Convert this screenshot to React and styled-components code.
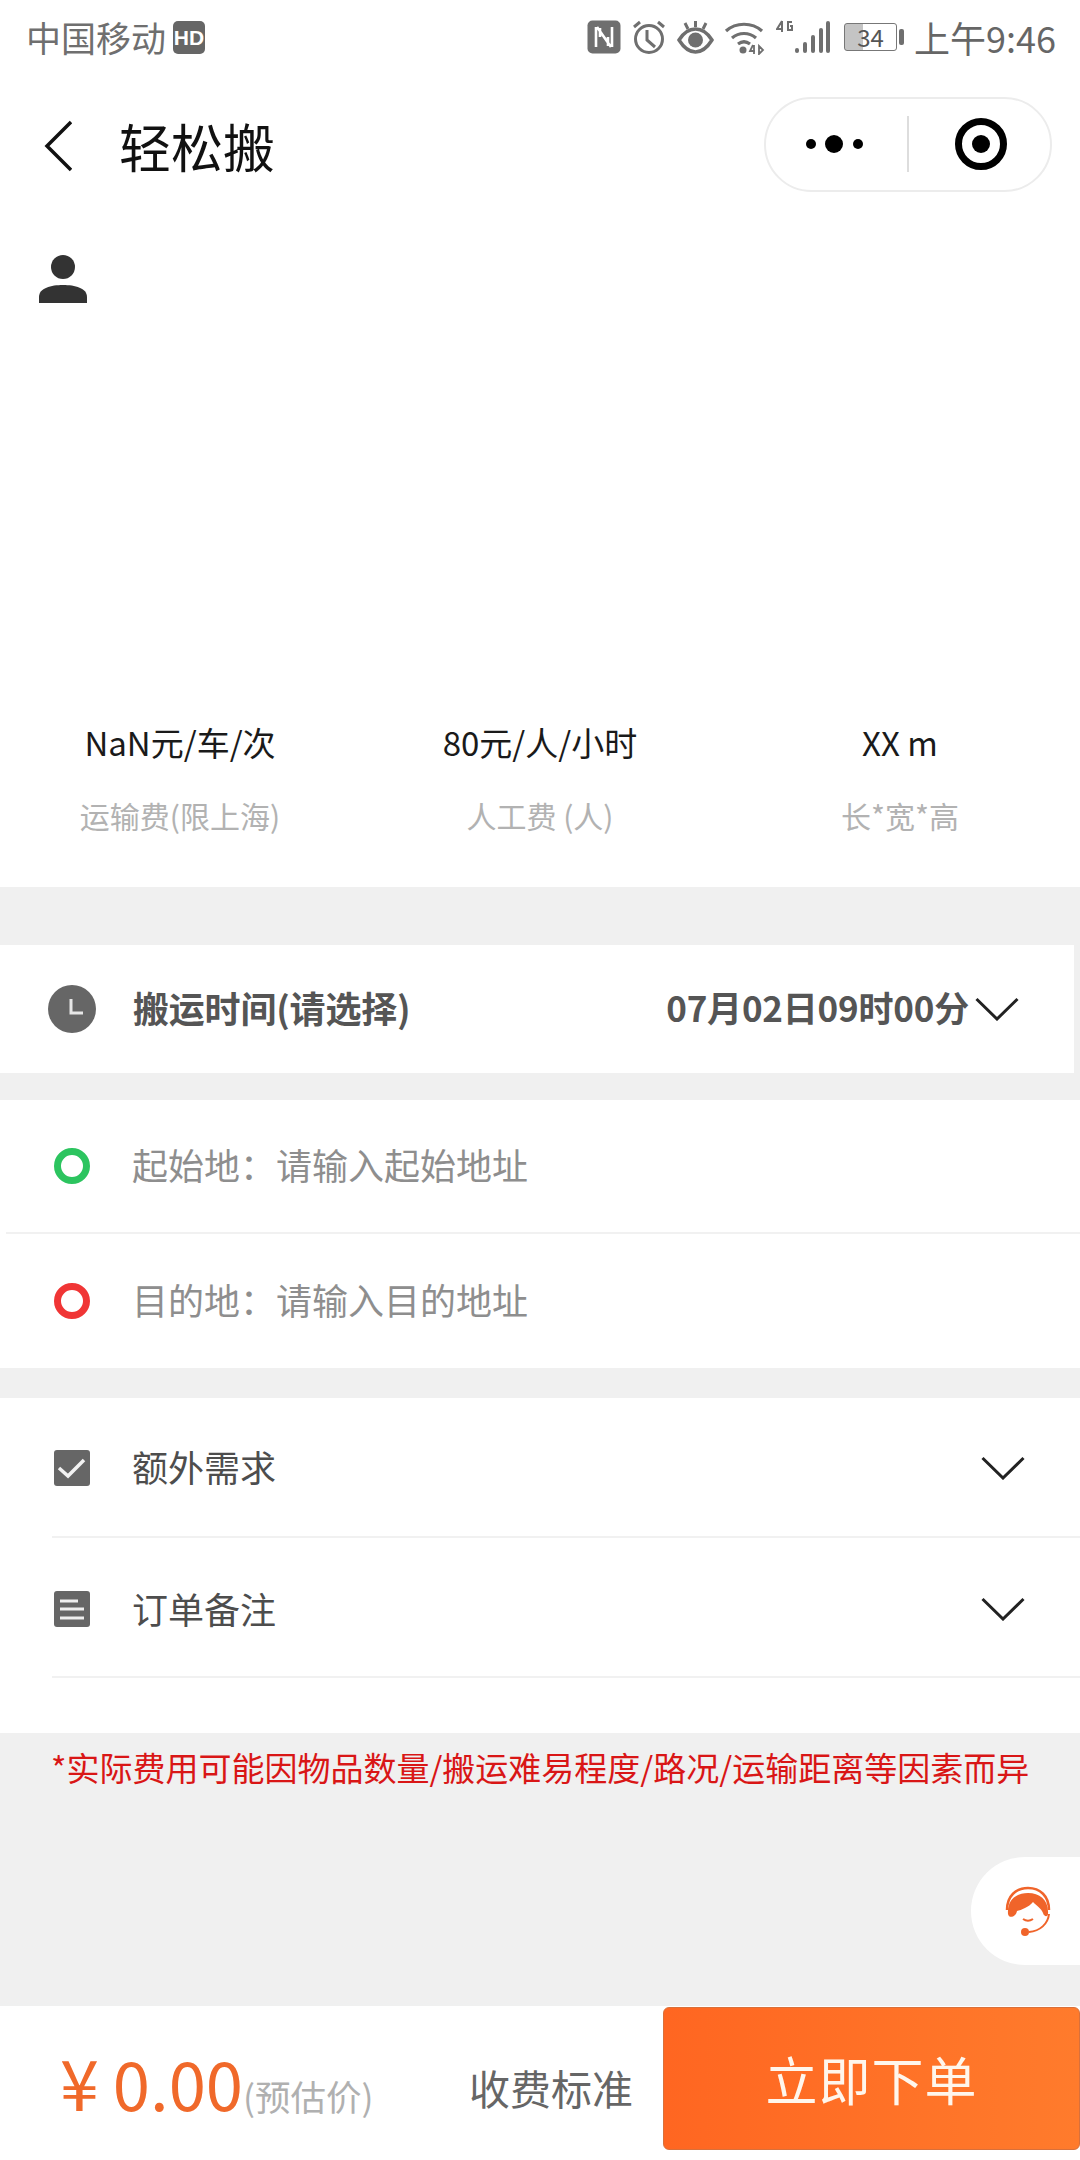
import React from 'react';
import styled, { createGlobalStyle } from 'styled-components';

const Global = createGlobalStyle`
  html, body { margin: 0; padding: 0; background: #f0f0f0; }
  * { box-sizing: border-box; }
  body { font-family: "Noto Sans CJK SC", "Noto Sans", sans-serif; }
`;

const Page = styled.div`
  position: relative;
  width: 1080px;
  height: 2160px;
  display: flex;
  flex-direction: column;
  overflow: hidden;
  background: #f0f0f0;
`;
const TopPanel = styled.section`
  height: 887px;
  background: #fff;
  display: flex;
  flex-direction: column;
`;
const StatusBar = styled.div`
  height: 74px;
  display: flex;
  align-items: center;
  padding: 0 24px 0 26px;
  color: #6f6f6f;
`;
const Carrier = styled.span`
  font-size: 35px;
  line-height: 40px;
  margin-right: 7px;
`;
const StatusIcons = styled.div`
  margin-left: auto;
  display: flex;
  align-items: center;
  gap: 10px;
`;
const Battery = styled.div`
  display: flex;
  align-items: center;
  gap: 2px;
  width: 62px;
`;
const BatteryBody = styled.div`
  width: 53px;
  height: 28px;
  border: 1.5px solid #777;
  border-radius: 3px;
  background: linear-gradient(90deg, #c4c4c4 18px, #fff 18px);
  font-size: 24px;
  line-height: 25px;
  color: #555;
  text-align: center;
`;
const BatteryNub = styled.div`
  width: 5px;
  height: 16px;
  border-radius: 2px;
  background: #6f6f6f;
`;
const Clock = styled.span`
  font-size: 36px;
  line-height: 40px;
  margin-left: -2px;
  color: #666;
`;
const Nav = styled.header`
  height: 144px;
  display: flex;
  align-items: center;
  padding: 0 28px 0 44px;
`;
const Title = styled.h1`
  margin: 0 0 0 47px;
  font-size: 52px;
  font-weight: 400;
  line-height: 60px;
  color: #111;
`;
const Capsule = styled.div`
  margin-left: auto;
  width: 288px;
  height: 95px;
  border: 2px solid #ececec;
  border-radius: 48px;
  display: flex;
  align-items: center;
  margin-bottom: 4px;
`;
const CapsuleHalf = styled.div`
  width: 50%;
  height: 100%;
  display: flex;
  align-items: center;
  justify-content: center;
  padding: ${p => (p.$shift ? '0 4px 0 0' : '0 0 0 3px')};
`;
const CapsuleLine = styled.div`
  width: 2px;
  height: 56px;
  background: #ddd;
  flex: none;
`;
const Profile = styled.div`
  padding: 37px 0 0 39px;
  height: 85px;
`;
const Stats = styled.div`
  margin-top: 414px;
  display: grid;
  grid-template-columns: repeat(3, 360px);
  text-align: center;
`;
const Stat = styled.div`
  display: flex;
  flex-direction: column;
  gap: 26px;
`;
const StatValue = styled.div`
  font-size: 33px;
  line-height: 50px;
  color: #1a1a1a;
`;
const StatLabel = styled.div`
  font-size: 30px;
  line-height: 44px;
  color: #b2b2b2;
`;
const TimeRow = styled.section`
  margin-top: 58px;
  width: 1074px;
  height: 128px;
  background: #fff;
  display: flex;
  align-items: center;
  padding: 0 55px 0 48px;
`;
const Slot = styled.div`
  width: ${p => (p.$narrow ? 36 : 48)}px;
  display: flex;
  justify-content: center;
  flex: none;
  margin-left: ${p => (p.$narrow ? 2 : 0)}px;
  margin-right: ${p => (p.$narrow ? 43 : 37)}px;
`;
const BoldText = styled.span`
  font-size: 36px;
  font-weight: 700;
  line-height: 50px;
  color: #555;
  margin-bottom: 5px;
  letter-spacing: -0.2px;
`;
const DateText = styled(BoldText)`
  margin-left: auto;
  margin-right: 6px;
  font-size: 35px;
`;
const Card = styled.section`
  margin-top: ${p => p.$top}px;
  background: #fff;
  padding-bottom: ${p => p.$bottom || 0}px;
`;
const Row = styled.div`
  height: ${p => p.$h}px;
  margin-left: ${p => p.$inset}px;
  padding: ${p => p.$drop || 0}px 55px 0 ${p => Math.max(0, 48 - p.$inset)}px;
  display: flex;
  align-items: center;
  border-bottom: ${p => (p.$line ? '2px solid #f1f1f1' : 'none')};
`;
const RowLabel = styled.span`
  font-size: 36px;
  line-height: 50px;
  color: #4d4d4d;
  margin: 0 0 3px -1px;
`;
const Placeholder = styled.span`
  font-size: 36px;
  line-height: 50px;
  color: #8e8e8e;
  white-space: nowrap;
  margin: 0 0 4px -1px;
`;
const PushRight = styled.div`
  margin-left: auto;
  display: flex;
`;
const Note = styled.p`
  margin: 11px 0 0;
  padding-left: 51px;
  font-size: 33px;
  line-height: 46px;
  color: #d91616;
  white-space: nowrap;
`;
const Fill = styled.div`
  flex: 1;
`;
const Footer = styled.footer`
  height: 154px;
  background: #fff;
  display: flex;
  align-items: flex-start;
`;
const PriceArea = styled.div`
  width: 469px;
  height: 142px;
  padding: 0 0 0 60px;
  display: flex;
  align-items: baseline;
  line-height: 150px;
  white-space: nowrap;
`;
const Yen = styled.span`
  font-size: 70px;
  color: #f0692a;
  margin-right: 14px;
  line-height: 150px;
`;
const Amount = styled.span`
  font-size: 67px;
  color: #f0692a;
`;
const Estimate = styled.span`
  font-size: 35.500px;
  color: #b0b0b0;
`;
const Fee = styled.span`
  width: 194px;
  height: 142px;
  font-size: 41px;
  line-height: 162px;
  color: #666;
  white-space: nowrap;
`;
const Submit = styled.button`
  width: 417px;
  height: 143px;
  margin-top: 1px;
  border: 1px solid #d9703a;
  border-radius: 6px;
  background: linear-gradient(90deg, #ff6621, #ff7b2c);
  color: #fff6ec;
  font-family: inherit;
  font-size: 52px;
  line-height: 60px;
  padding: 0;
  letter-spacing: 1px;
`;
const ServiceTab = styled.div`
  position: absolute;
  right: 0;
  top: 1857px;
  width: 109px;
  height: 108px;
  border-radius: 54px 0 0 54px;
  background: #fff;
  display: flex;
  align-items: center;
  padding-left: 33px;
`;

const Chevron = () => (
  <svg width="44" height="24" viewBox="0 0 44 24">
    <path d="M1.5 2 L22 22 L42.5 2" fill="none" stroke="#222" strokeWidth="3" />
  </svg>
);

const statusIcons = (
  <StatusIcons>
    <svg width="34" height="34" viewBox="0 0 34 34">
      <rect width="33" height="33" x="0.5" y="0.5" rx="5" fill="#6f6f6f" />
      <path d="M9 7v20M25 7v20M10 7l14 20M13 8v9M21 26v-9" stroke="#fff" strokeWidth="2.6" fill="none" />
    </svg>
    <svg width="36" height="36" viewBox="0 0 36 36">
      <circle cx="18" cy="20" r="13.5" fill="none" stroke="#6f6f6f" strokeWidth="3" />
      <path d="M16 11v10l8 7" fill="none" stroke="#6f6f6f" strokeWidth="3" />
      <path d="M3 8l6-5M33 8l-6-5" stroke="#6f6f6f" strokeWidth="3" />
    </svg>
    <svg width="37" height="36" viewBox="0 0 37 36">
      <path d="M2 21c5-8 11-11 16.500-11S30 13 35 21c-5 8-11 12-16.500 12S7 29 2 21z" fill="none" stroke="#6f6f6f" strokeWidth="3.500" />
      <circle cx="18.500" cy="21" r="7.500" fill="#6f6f6f" />
      <path d="M18.500 2v6M8 4l3 6M29 4l-3 6" stroke="#6f6f6f" strokeWidth="3" />
    </svg>
    <svg width="42" height="36" viewBox="0 0 42 36">
      <path d="M2 12C12 3 28 3 38 12M8 19c7-6 17-6 24 0M14 25c4-3 8-3 12 0" fill="none" stroke="#6f6f6f" strokeWidth="3.200" />
      <circle cx="19" cy="31" r="3.500" fill="#6f6f6f" />
      <path d="M29 26l-3 6h5M30 26v9M35 27v8l4-4z" fill="none" stroke="#6f6f6f" strokeWidth="1.800" />
    </svg>
    <svg width="58" height="36" viewBox="0 0 58 36">
      <path d="M6 2L1 10h6M6 2v11M16 3h-4v8h4V7h-2" fill="none" stroke="#6f6f6f" strokeWidth="2" />
      <rect x="19" y="29" width="4" height="5" rx="2" fill="#6f6f6f" />
      <rect x="27" y="23" width="4" height="11" rx="2" fill="#6f6f6f" />
      <rect x="35" y="16" width="4" height="18" rx="2" fill="#6f6f6f" />
      <rect x="43" y="9" width="4" height="25" rx="2" fill="#6f6f6f" />
      <rect x="50" y="2" width="4" height="32" rx="2" fill="#6f6f6f" />
    </svg>
    <Battery>
      <BatteryBody>34</BatteryBody>
      <BatteryNub />
    </Battery>
    <Clock>上午9:46</Clock>
  </StatusIcons>
);

const stats = [
  ['NaN元/车/次', '运输费(限上海)'],
  ['80元/人/小时', '人工费 (人)'],
  ['XX m', '长*宽*高'],
];

export default function App() {
  return (
    <Page>
      <Global />
      <TopPanel>
        <StatusBar>
          <Carrier>中国移动</Carrier>
          <svg width="32" height="33" viewBox="0 0 32 33">
            <rect width="32" height="33" rx="5" fill="#666" />
            <text x="16" y="24" fontSize="21" fontWeight="700" fontFamily="Liberation Sans, sans-serif" fill="#fff" textAnchor="middle">HD</text>
          </svg>
          {statusIcons}
        </StatusBar>
        <Nav>
          <svg width="28" height="52" viewBox="0 0 28 52">
            <path d="M27 2 L3 26 L27 50" fill="none" stroke="#111" strokeWidth="3.500" />
          </svg>
          <Title>轻松搬</Title>
          <Capsule>
            <CapsuleHalf $shift>
              <svg width="60" height="20" viewBox="0 0 60 20">
                <circle cx="6" cy="10" r="5" fill="#000" />
                <circle cx="29" cy="10" r="9" fill="#000" />
                <circle cx="53" cy="10" r="5" fill="#000" />
              </svg>
            </CapsuleHalf>
            <CapsuleLine />
            <CapsuleHalf>
              <svg width="52" height="52" viewBox="0 0 52 52">
                <circle cx="26" cy="26" r="22.500" fill="none" stroke="#000" strokeWidth="7" />
                <circle cx="26" cy="26" r="9" fill="#000" />
              </svg>
            </CapsuleHalf>
          </Capsule>
        </Nav>
        <Profile>
          <svg width="48" height="48" viewBox="0 0 48 48">
            <circle cx="24" cy="12" r="12" fill="#333" />
            <path d="M0 48V42C0 33 12 30 24 30S48 33 48 42V48Z" fill="#333" />
          </svg>
        </Profile>
        <Stats>
          {stats.map(([value, label]) => (
            <Stat key={label}>
              <StatValue>{value}</StatValue>
              <StatLabel>{label}</StatLabel>
            </Stat>
          ))}
        </Stats>
      </TopPanel>

      <TimeRow>
        <Slot>
          <svg width="48" height="48" viewBox="0 0 48 48">
            <circle cx="24" cy="24" r="24" fill="#666" />
            <path d="M23 14V28H35" fill="none" stroke="#e6e6e6" strokeWidth="3" />
          </svg>
        </Slot>
        <BoldText>搬运时间(请选择)</BoldText>
        <DateText>07月02日09时00分</DateText>
        <Chevron />
      </TimeRow>

      <Card $top={27}>
        <Row $h={134} $inset={6} $line>
          <Slot>
            <svg width="36" height="36" viewBox="0 0 36 36">
              <circle cx="18" cy="18" r="14.500" fill="none" stroke="#2cc45f" strokeWidth="7" />
            </svg>
          </Slot>
          <Placeholder>起始地：请输入起始地址</Placeholder>
        </Row>
        <Row $h={134} $inset={6}>
          <Slot>
            <svg width="36" height="36" viewBox="0 0 36 36">
              <circle cx="18" cy="18" r="14.500" fill="none" stroke="#f03535" strokeWidth="7" />
            </svg>
          </Slot>
          <Placeholder>目的地：请输入目的地址</Placeholder>
        </Row>
      </Card>

      <Card $top={30} $bottom={55}>
        <Row $h={140} $inset={52} $line $drop={1}>
          <Slot $narrow>
            <svg width="36" height="36" viewBox="0 0 36 36">
              <rect width="36" height="36" rx="3" fill="#666" />
              <path d="M5 18L14 26L30 10" fill="none" stroke="#f2f2f2" strokeWidth="3.500" />
            </svg>
          </Slot>
          <RowLabel>额外需求</RowLabel>
          <PushRight><Chevron /></PushRight>
        </Row>
        <Row $h={140} $inset={52} $line $drop={4}>
          <Slot $narrow>
            <svg width="36" height="36" viewBox="0 0 36 36">
              <rect width="36" height="36" rx="3" fill="#666" />
              <path d="M6 10H24M6 18H30M6 27H30" fill="none" stroke="#eee" strokeWidth="3" />
            </svg>
          </Slot>
          <RowLabel>订单备注</RowLabel>
          <PushRight><Chevron /></PushRight>
        </Row>
      </Card>

      <Note>*实际费用可能因物品数量/搬运难易程度/路况/运输距离等因素而异</Note>
      <Fill />

      <ServiceTab>
        <svg width="48" height="50" viewBox="0 0 48 50">
          <path d="M3 24C3 10 12 2 24 2S45 10 45 24" fill="none" stroke="#f0642a" strokeWidth="2.500" />
          <path d="M4 28C3 14 12 7 24 7S45 14 44 28C44 31 40 31 39 27C37 22 33 20 29 16C25 21 17 24 13 25C12 31 5 33 4 28Z" fill="#f0642a" />
          <path d="M19 33C22 35 26 35 29 33" fill="none" stroke="#f0642a" strokeWidth="2" />
          <path d="M45 28C44 38 36 45 25 46" fill="none" stroke="#f0642a" strokeWidth="2" />
          <circle cx="21" cy="46" r="4" fill="#f0642a" />
        </svg>
      </ServiceTab>

      <Footer>
        <PriceArea>
          <Yen>¥</Yen>
          <Amount>0.00</Amount>
          <Estimate>(预估价)</Estimate>
        </PriceArea>
        <Fee>收费标准</Fee>
        <Submit>立即下单</Submit>
      </Footer>
    </Page>
  );
}
